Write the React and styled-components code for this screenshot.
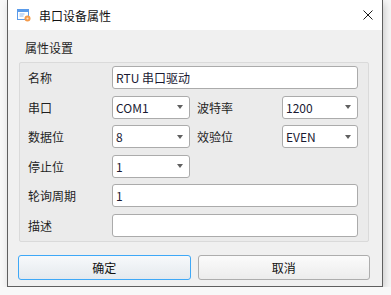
import React from 'react';
import styled, { createGlobalStyle } from 'styled-components';

const GlobalStyle = createGlobalStyle`
  html, body {
    margin: 0;
    padding: 0;
    background: #f8f8f8;
  }
  body {
    font-family: "Noto Sans CJK SC", "Noto Sans", sans-serif;
    font-size: 12px;
    color: #1f1f1f;
  }
`;

const Window = styled.div`
  margin-left: 7px;
  width: 374px;
  height: 286px;
  border: 1px solid #5f5f5f;
  border-top: none;
  background: #f0f0f0;
  box-shadow: 2px 3px 8px rgba(0, 0, 0, 0.18);
  display: flex;
  flex-direction: column;
`;

const TitleBar = styled.div`
  height: 30px;
  background: #ffffff;
  display: flex;
  align-items: center;
  padding: 0 9px;
  gap: 8px;
`;

const Title = styled.div`
  flex: 1;
  font-size: 12px;
  color: #111;
  line-height: 16px;
  padding-top: 1px;
`;

const CloseBtn = styled.div`
  width: 10px;
  height: 10px;
  margin-right: 0;
  display: flex;
`;

const Body = styled.div`
  flex: 1;
  padding: 10px 13px 0 11px;
  display: flex;
  flex-direction: column;
`;

const GroupLabel = styled.div`
  line-height: 16px;
  margin-bottom: 6px;
  padding-left: 6px;
`;

const GroupBox = styled.div`
  background: #ebebeb;
  border: 1px solid #dadada;
  border-radius: 2px;
  padding: 3px 9px 4px 8px;
  display: grid;
  grid-template-columns: 84px 78px 92px 76px;
  grid-auto-rows: 23px;
  row-gap: 6.5px;
`;

const Label = styled.div`
  display: flex;
  align-items: center;
  padding-left: ${p => (p.$indent ? '7px' : '0')};
  color: #1f1f1f;
`;

const TextInput = styled.div`
  grid-column: span 3;
  background: #fff;
  border: 1px solid #ababab;
  border-radius: 3px;
  display: flex;
  align-items: center;
  padding-left: 3px;
  color: #1a1a33;
`;

const Combo = styled.div`
  background: #fff;
  border: 1px solid #ababab;
  border-radius: 3px;
  display: flex;
  align-items: center;
  justify-content: space-between;
  padding: 0 6px 0 3px;
  color: #1a1a33;
`;

const Arrow = styled.span`
  width: 0;
  height: 0;
  border-left: 3.5px solid transparent;
  border-right: 3.5px solid transparent;
  border-top: 4px solid #606060;
`;

const ButtonRow = styled.div`
  margin: 13px -1px 0 -1px;
  display: grid;
  grid-template-columns: 1fr 1fr;
  column-gap: 7px;
`;

const Button = styled.div`
  height: 23px;
  border: 1px solid ${p => (p.$primary ? '#3ea8f7' : '#adadad')};
  border-radius: 3px;
  background: ${p =>
    p.$primary
      ? 'linear-gradient(#f7f9fb, #e4e9ee)'
      : 'linear-gradient(#fbfbfb, #ececec)'};
  display: flex;
  align-items: center;
  justify-content: center;
  color: #111;
`;

const Spacer = styled.div`
  grid-column: span 2;
`;

function AppIcon() {
  return (
    <svg width="14" height="14" viewBox="0 0 14 14">
      <rect x="0.5" y="1.5" width="11" height="10" fill="#fff" stroke="#5b9bea" />
      <rect x="0.5" y="1.5" width="11" height="2.5" fill="#5b9bea" />
      <rect x="2.5" y="5.5" width="5" height="1" fill="#8fb8ee" />
      <rect x="2.5" y="7.5" width="4" height="1" fill="#8fb8ee" />
      <circle cx="10.5" cy="10.5" r="3" fill="#f39a4b" />
      <circle cx="10.5" cy="10.5" r="1.1" fill="#ffe0c2" />
    </svg>
  );
}

function CloseIcon() {
  return (
    <svg width="10" height="10" viewBox="0 0 10 10">
      <path d="M0.5 0.5 L9.5 9.5 M9.5 0.5 L0.5 9.5" stroke="#1a1a1a" strokeWidth="1" />
    </svg>
  );
}

function Select({ value }) {
  return (
    <Combo>
      <span>{value}</span>
      <Arrow />
    </Combo>
  );
}

export default function App() {
  return (
    <>
      <GlobalStyle />
      <Window>
        <TitleBar>
          <AppIcon />
          <Title>串口设备属性</Title>
          <CloseBtn>
            <CloseIcon />
          </CloseBtn>
        </TitleBar>
        <Body>
          <GroupLabel>属性设置</GroupLabel>
          <GroupBox>
            <Label>名称</Label>
            <TextInput>RTU 串口驱动</TextInput>

            <Label>串口</Label>
            <Select value="COM1" />
            <Label $indent>波特率</Label>
            <Select value="1200" />

            <Label>数据位</Label>
            <Select value="8" />
            <Label $indent>效验位</Label>
            <Select value="EVEN" />

            <Label>停止位</Label>
            <Select value="1" />
            <Spacer />

            <Label>轮询周期</Label>
            <TextInput>1</TextInput>

            <Label>描述</Label>
            <TextInput />
          </GroupBox>
          <ButtonRow>
            <Button $primary>确定</Button>
            <Button>取消</Button>
          </ButtonRow>
        </Body>
      </Window>
    </>
  );
}
